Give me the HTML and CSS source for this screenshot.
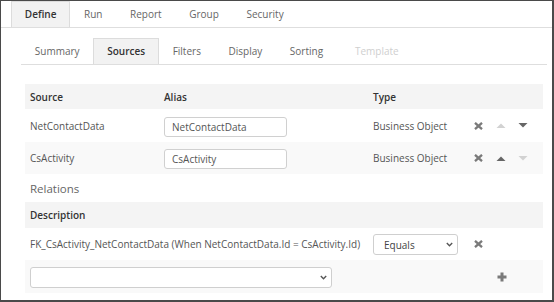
FILE: index.html
```html
<!DOCTYPE html>
<html>
<head>
<meta charset="utf-8">
<link rel="stylesheet" href="styles.css">
</head>
<body>
<div class="frame">
  <div class="tabs top">
    <div class="tab active">Define</div>
    <div class="tab">Run</div>
    <div class="tab">Report</div>
    <div class="tab">Group</div>
    <div class="tab">Security</div>
  </div>
  <div class="content">
    <div class="tabs sub">
      <div class="tab">Summary</div>
      <div class="tab active">Sources</div>
      <div class="tab">Filters</div>
      <div class="tab">Display</div>
      <div class="tab">Sorting</div>
      <div class="tab disabled">Template</div>
    </div>
    <div class="panel">
      <div class="row head h25">
        <div class="cell">Source</div>
        <div class="cell">Alias</div>
        <div class="cell">Type</div>
        <div class="cell"></div>
      </div>
      <div class="row h33">
        <div class="cell">NetContactData</div>
        <div class="cell"><input class="field" value="NetContactData"></div>
        <div class="cell">Business Object</div>
        <div class="cell actions">
          <svg class="ico x" width="9" height="8" viewBox="0 0 9 8"><path d="M1 0.8 L8 7.2 M8 0.8 L1 7.2" stroke="#7a7a7a" stroke-width="2.3"/></svg>
          <svg class="ico tri" width="10" height="5" viewBox="0 0 10 5"><polygon points="0.5,5 9.5,5 5,0.5" fill="#d2d2d2"/></svg>
          <svg class="ico tri" width="10" height="5" viewBox="0 0 10 5"><polygon points="0.5,0 9.5,0 5,4.5" fill="#666"/></svg>
        </div>
      </div>
      <div class="row alt h32">
        <div class="cell">CsActivity</div>
        <div class="cell"><input class="field" value="CsActivity"></div>
        <div class="cell">Business Object</div>
        <div class="cell actions">
          <svg class="ico x" width="9" height="8" viewBox="0 0 9 8"><path d="M1 0.8 L8 7.2 M8 0.8 L1 7.2" stroke="#7a7a7a" stroke-width="2.3"/></svg>
          <svg class="ico tri" width="10" height="5" viewBox="0 0 10 5"><polygon points="0.5,5 9.5,5 5,0.5" fill="#666"/></svg>
          <svg class="ico tri" width="10" height="5" viewBox="0 0 10 5"><polygon points="0.5,0 9.5,0 5,4.5" fill="#d2d2d2"/></svg>
        </div>
      </div>
      <div class="section-title">Relations</div>
      <div class="row head h26">
        <div class="cell span2">Description</div>
      </div>
      <div class="row h32">
        <div class="cell span2">FK_CsActivity_NetContactData (When NetContactData.Id = CsActivity.Id)</div>
        <div class="cell">
          <div class="select eq"><span>Equals</span>
            <svg width="7" height="5" viewBox="0 0 7 5"><path d="M0.8 1 L3.5 3.7 L6.2 1" fill="none" stroke="#555" stroke-width="1.4"/></svg>
          </div>
        </div>
        <div class="cell actions">
          <svg class="ico x" width="9" height="8" viewBox="0 0 9 8"><path d="M1 0.8 L8 7.2 M8 0.8 L1 7.2" stroke="#7a7a7a" stroke-width="2.3"/></svg>
        </div>
      </div>
      <div class="row alt h33">
        <div class="cell span2">
          <div class="select wide"><span></span>
            <svg width="7" height="5" viewBox="0 0 7 5"><path d="M0.8 1 L3.5 3.7 L6.2 1" fill="none" stroke="#555" stroke-width="1.4"/></svg>
          </div>
        </div>
        <div class="cell"></div>
        <div class="cell actions">
          <span class="ico spacer"></span>
          <svg class="ico plus" width="10" height="10" viewBox="0 0 10 10"><path d="M5 0.5 V9.5 M0.5 5 H9.5" stroke="#7a7a7a" stroke-width="3"/></svg>
        </div>
      </div>
    </div>
  </div>
</div>
</body>
</html>
```
FILE: styles.css
```css
html, body {
  margin: 0;
  padding: 0;
  background: #fff;
}
body {
  font-family: "Open Sans", "Liberation Sans", sans-serif;
  font-size: 10px;
  color: #555;
}
.frame {
  width: 554px;
  height: 302px;
  box-sizing: border-box;
  border: 1px solid #4a4a4a;
  border-right-width: 2px;
  border-bottom-width: 2px;
  overflow: hidden;
}
.tabs {
  display: flex;
  border-bottom: 1px solid #dedede;
}
.tabs.top {
  padding-left: 10px;
}
.tabs.sub {
  margin-top: 10px;
}
.tab {
  height: 25px;
  line-height: 25px;
  padding: 0 12.8px;
  border: 1px solid transparent;
  border-bottom: 0;
  color: #666;
  font-size: 10px;
}
.tab.active {
  background: #f2f2f2;
  border-color: #dcdcdc;
  color: #333;
  font-weight: 600;
}
.tab.disabled {
  color: #cfcfcf;
  padding-left: 17px;
}
.content {
  margin: 0 5px 0 20px;
}
.panel {
  margin-top: 19px;
  padding: 0 4px;
}
.row {
  display: grid;
  grid-template-columns: 134px 209px 101px 1fr;
  align-items: center;
}
.row.head {
  background: #f4f4f4;
  color: #333;
  font-weight: 600;
}
.row.alt {
  background: #f9f9f9;
}
.h25 { height: 25px; }
.h26 { height: 26px; }
.h32 { height: 32px; }
.h33 { height: 33px; }
.cell {
  padding-left: 5px;
  white-space: nowrap;
}
.span2 {
  grid-column: span 2;
}
.field {
  width: 123px;
  height: 20px;
  box-sizing: border-box;
  border: 1px solid #d0d0d0;
  border-radius: 3px;
  padding: 0 7px;
  font-family: inherit;
  font-size: 10px;
  color: #555;
  background: #fff;
  margin-top: 2px;
}
.actions {
  display: flex;
  align-items: center;
  padding-left: 5px;
}
.ico {
  display: block;
}
.ico.x {
  margin-right: 13px;
}
.ico.tri {
  margin-right: 12px;
}
.ico.spacer {
  width: 9px;
  height: 8px;
  margin-right: 14px;
}
.section-title {
  height: 28px;
  line-height: 30px;
  padding-left: 5px;
  font-size: 11.5px;
  color: #666;
}
.select {
  display: flex;
  align-items: center;
  justify-content: space-between;
  box-sizing: border-box;
  border: 1px solid #cfcfcf;
  border-radius: 3px;
  background: #fff;
  color: #444;
}
.select.eq {
  width: 85px;
  height: 21px;
  padding: 0 4px 0 10px;
  margin-top: 1px;
}
.select.wide {
  width: 302px;
  height: 21px;
  padding: 0 4px 0 10px;
  margin-top: 1px;
}
```
